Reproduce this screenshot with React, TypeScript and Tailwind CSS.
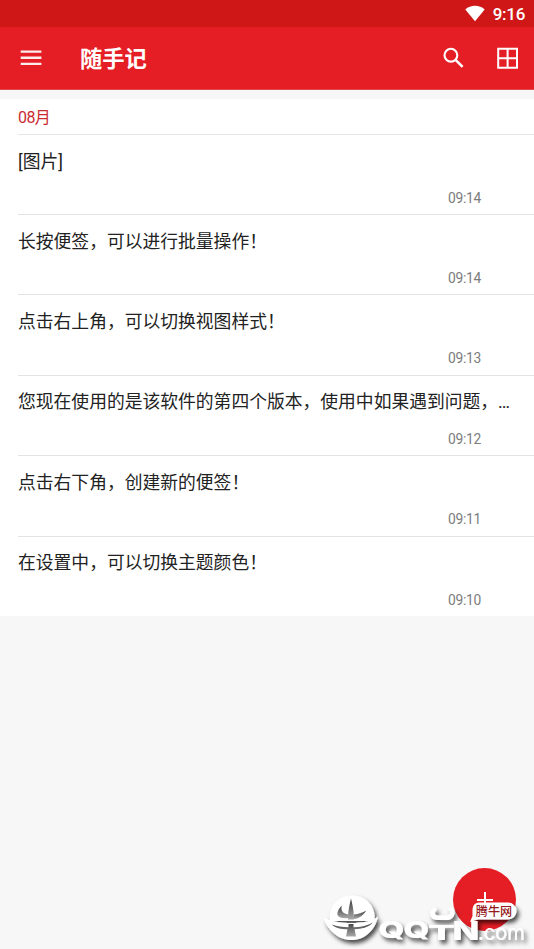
const notes = [
  { text: "[图片]", time: "09:14", box: "h-20 pt-[15px] pb-2" },
  { text: "长按便签，可以进行批量操作！", time: "09:14", box: "h-20 pt-[15px] pb-2" },
  { text: "点击右上角，可以切换视图样式！", time: "09:13", box: "h-[81px] pt-[15px] pb-[9px]" },
  { text: "您现在使用的是该软件的第四个版本，使用中如果遇到问题，…", time: "09:12", box: "h-20 pt-[14px] pb-2" },
  { text: "点击右下角，创建新的便签！", time: "09:11", box: "h-[81px] pt-[15px] pb-[9px]" },
  { text: "在设置中，可以切换主题颜色！", time: "09:10", box: "h-[79px] pt-[14px] pb-2" },
];

const StatusBar = () => (
  <div className="h-[27px] bg-[#cf1717] flex items-center justify-end pr-[9px] gap-[8px] text-white">
    <svg width="20" height="18" viewBox="0 0 20 18" fill="currentColor">
      <path d="M0.3 4.4C5.5-.5 14.5-.5 19.7 4.4L10 16.2Z" />
    </svg>
    <span className="text-[17px] leading-none font-medium tracking-[-0.3px] pt-[2px]">9:16</span>
  </div>
);

const AppBar = () => (
  <header className="h-[63px] bg-[#e51e25] border-b border-[#e2474c] flex items-center text-white">
    <svg className="ml-[20px]" width="22" height="18" viewBox="0 0 22 18" fill="currentColor" opacity=".92">
      <path d="M.7 1.4h20.7v2.3H.7zM.7 7.6h20.7v2.3H.7zM.7 13.7h20.7V16H.7z" />
    </svg>
    <h1 className="ml-[38px] mt-[3px] text-[22.3px] leading-none font-bold">随手记</h1>
    <svg className="ml-auto" width="22" height="22" viewBox="0 0 22 22" fill="none" stroke="currentColor">
      <circle cx="7.9" cy="8.2" r="6.4" strokeWidth="2.1" />
      <path d="M12.6 12.9L19.6 19.9" strokeWidth="2.6" />
    </svg>
    <svg className="ml-[32px] mr-[15px]" width="22" height="22" viewBox="0 0 22 22" fill="none" stroke="currentColor" strokeWidth="2">
      <path d="M1.2 1.8h18.8v19H1.2zM10.6 1.8v19M1.2 11.3h18.8" />
    </svg>
  </header>
);

const Watermark = () => (
  <svg className="absolute left-[320px] top-[860px] pointer-events-none" width="214" height="89" viewBox="0 0 214 89">
    <defs>
      <filter id="shadow" x="-10%" y="-10%" width="125%" height="135%">
        <feDropShadow dx="2.5" dy="3.5" stdDeviation="2.2" floodColor="#000" floodOpacity=".7" />
      </filter>
      <linearGradient id="cut" x1="0" y1="0" x2="0" y2="1">
        <stop offset="0" stopColor="#3c3c3c" />
        <stop offset="1" stopColor="#aaa" />
      </linearGradient>
    </defs>
    <g fill="#fff" filter="url(#shadow)">
      <path d="M10 61C8 46 18 35.5 32 35.5S56 46 54.5 61Z" />
      <path d="M4 57C9 61 20 63 31.5 63S53 61 58 56.5C56 65 53 69 49 73C44.5 77.5 38 80 31.5 80S18 77.5 13.500 73C10 69.5 5 65 4 57Z" />
      <g fontSize="23.5" fontWeight="800" fontFamily="Inter, sans-serif">
        <text x="58.5" y="77.5" textLength="26" lengthAdjust="spacingAndGlyphs">Q</text>
        <text x="83.5" y="77.5" textLength="26" lengthAdjust="spacingAndGlyphs">Q</text>
        <text x="108" y="79.5" fontSize="20" textLength="27" lengthAdjust="spacingAndGlyphs">T</text>
        <text x="132.5" y="79.5" fontSize="26" textLength="27" lengthAdjust="spacingAndGlyphs">N</text>
      </g>
      <text x="158" y="79.5" fontSize="22" fontWeight="400" fontFamily="Inter, sans-serif" textLength="47" lengthAdjust="spacingAndGlyphs">.com</text>
      <path d="M114.5 47.5C108 50 109 60 117 60h10C135 60 137 50 131 47.5C128 47 128 49 129.5 51C131 54 129 55.5 126 55.5h-7.5C115 55.5 114 53 116 51C117 49.5 116.5 47.5 114.5 47.5Z" />
      <path d="M159.5 42.5h28.5a8.5 8.5 0 0 1 0 17H158L150 62 152.5 56V49a6.5 6.5 0 0 1 7-6.5Z" />
    </g>
    <g fill="url(#cut)">
      <path d="M31 38.5C32.5 45 34 51 34 59.5H28C28 51 29.5 45 31 38.5Z" />
      <path d="M21.8 45.5C21 49 21 53 28 54.5V58C20 59 16.5 56 17.5 52.5C18.2 49.5 20 47.5 21.8 45.5Z" />
      <path d="M34 54.5C39 54 43 52.5 46 50.5C44.5 54 40 58.5 34 59Z" />
      <path d="M12 64.5C17 66.5 22 67.2 28.5 67.2V64H33.5V67.2C41 67.2 48 65.500 53 62.500C48 67.500 42 69 34.500 69.200L36 76.500H26L27.500 69.200C21 69.200 15 68 12 64.500Z" />
    </g>
    <text x="155.8" y="55.7" fontSize="12.1" fontWeight="500" fill="#96191b">腾牛网</text>
  </svg>
);

export default function App() {
  return (
    <div className="relative h-[949px] w-[534px] overflow-hidden bg-[#f7f7f7] font-[Roboto,'Noto_Sans_CJK_SC',sans-serif]">
      <StatusBar />
      <AppBar />
      <main className="mt-[9px] bg-white">
        <div className="ml-[18px] h-9 pt-[3px] border-b border-[#e6e6e6] flex items-center text-[16px] leading-none tracking-[-0.6px] text-[#c92b31]">
          08月
        </div>
        <ul>
          {notes.map((note, i) => (
            <li
              key={i}
              className={`${note.box} ml-[18px] flex flex-col border-b border-[#e3e3e3] last:border-0`}
            >
              <p className="whitespace-nowrap text-[17.8px] leading-6 text-[#222]">{note.text}</p>
              <time className="mt-auto mr-[53px] self-end text-[13.8px] leading-4 tracking-[-0.25px] text-[#7c7c7c]">{note.time}</time>
            </li>
          ))}
        </ul>
      </main>
      <button aria-label="新建便签" className="absolute left-[453px] top-[868px] size-[63px] rounded-full bg-[#e51e25] flex items-center justify-center">
        <svg width="16" height="16" viewBox="0 0 16 16" stroke="#fff" strokeWidth="2">
          <path d="M8 0v16M0 8h16" />
        </svg>
      </button>
      <Watermark />
    </div>
  );
}
